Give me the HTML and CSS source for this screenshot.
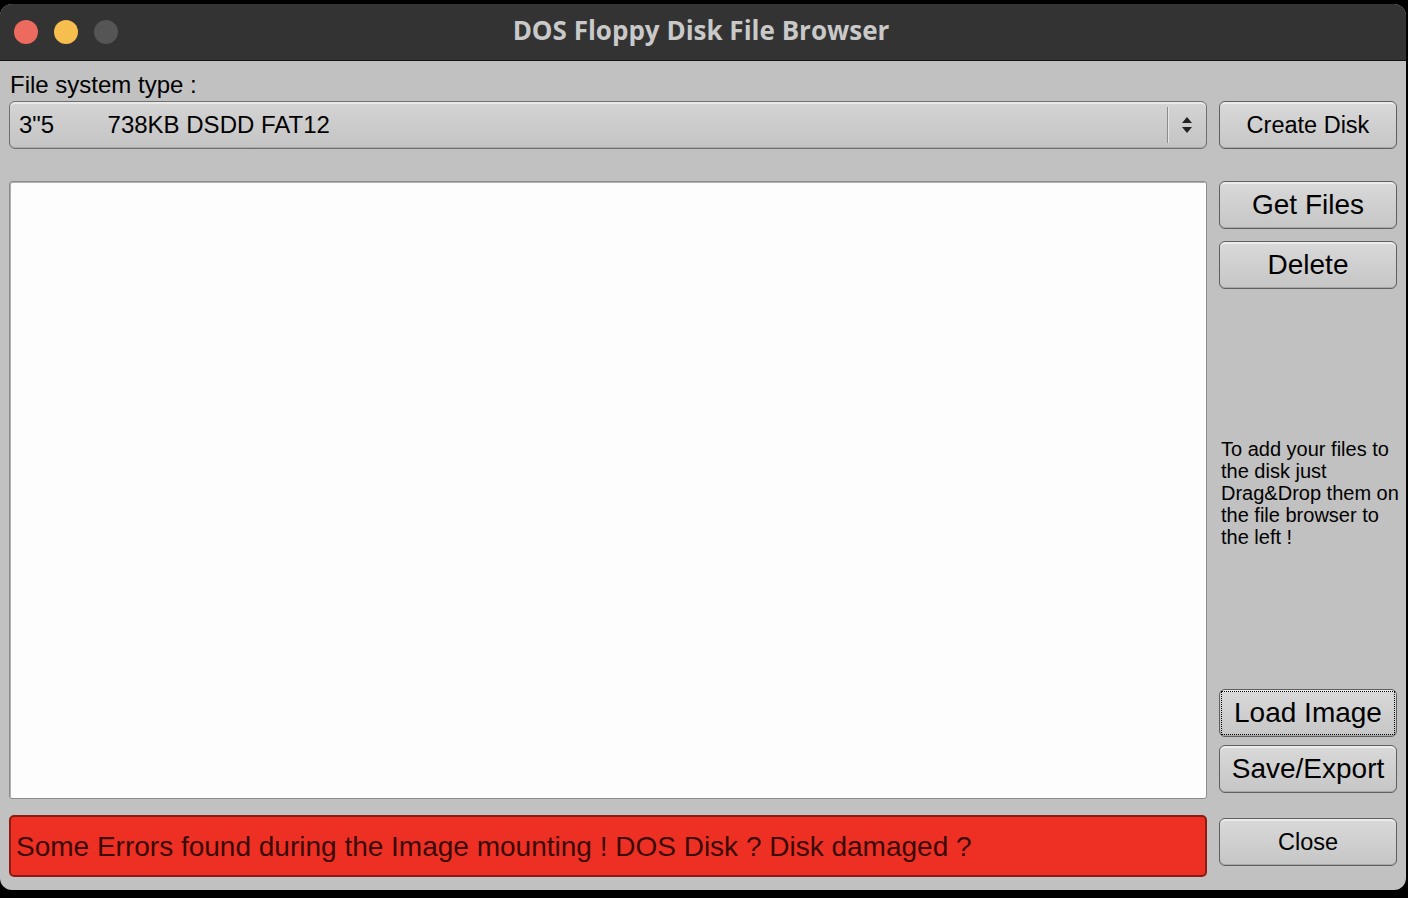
FILE: index.html
```html
<!DOCTYPE html>
<html>
<head>
<meta charset="utf-8">
<link rel="stylesheet" href="styles.css">
</head>
<body>
<div class="window">
  <div class="titlebar">
    <div class="lights">
      <span class="light red"></span>
      <span class="light yellow"></span>
      <span class="light gray"></span>
    </div>
    <div class="title">DOS Floppy Disk File Browser</div>
    <div></div>
  </div>
  <div class="content">
    <div class="label">File system type :</div>
    <div class="row top-row">
      <div class="combo">
        <span class="combo-text">3"5        738KB DSDD FAT12</span>
        <span class="combo-sep"></span>
        <svg class="combo-arrows" width="12" height="22" viewBox="0 0 12 22">
          <path d="M6 3 L11 9 L1 9 Z" fill="#222"/>
          <path d="M6 19 L11 13 L1 13 Z" fill="#222"/>
        </svg>
      </div>
      <button class="btn btn-sm">Create Disk</button>
    </div>
    <div class="row main-row">
      <div class="filelist"></div>
      <div class="side">
        <button class="btn btn-lg">Get Files</button>
        <button class="btn btn-lg">Delete</button>
        <div class="help-wrap">
          <p class="help">To add your files to the disk just Drag&amp;Drop them on the file browser to the left !</p>
        </div>
        <button class="btn btn-lg focused"><span class="focus">Load Image</span></button>
        <button class="btn btn-lg save">Save/Export</button>
      </div>
    </div>
    <div class="row bottom-row">
      <div class="error">Some Errors found during the Image mounting ! DOS Disk ? Disk damaged ?</div>
      <button class="btn btn-sm close">Close</button>
    </div>
  </div>
</div>
</body>
</html>
```

FILE: styles.css
```css
html, body {
  margin: 0;
  padding: 0;
  background: #000;
}
body {
  width: 1408px;
  height: 898px;
  overflow: hidden;
  font-family: "Liberation Sans", Arial, sans-serif;
  color: #000;
}
.window {
  margin-top: 4px;
  width: 1406px;
  height: 886px;
  background: #c1c1c1;
  border-radius: 12px;
  overflow: hidden;
  display: flex;
  flex-direction: column;
}
.titlebar {
  height: 56px;
  flex: none;
  background: #333333;
  border-bottom: 1px solid #141414;
  display: grid;
  grid-template-columns: 1fr auto 1fr;
  align-items: center;
}
.lights {
  display: flex;
  gap: 16px;
  padding-left: 14px;
}
.light {
  width: 24px;
  height: 24px;
  border-radius: 50%;
  display: block;
}
.red { background: #ed6a5f; }
.yellow { background: #f5be4f; }
.gray { background: #555555; }
.title {
  font-family: "Open Sans", "Liberation Sans", sans-serif;
  font-weight: 700;
  font-size: 26px;
  line-height: 30px;
  color: #c9c9c9;
  margin-top: -4px;
  margin-right: 4px;
}
.content {
  flex: 1;
  display: flex;
  flex-direction: column;
  padding: 10px 9px 12px 9px;
}
.label {
  font-size: 24px;
  line-height: 28px;
  padding-left: 1px;
  margin-bottom: 2px;
}
.row {
  display: flex;
  gap: 12px;
}
.combo {
  flex: 1;
  height: 48px;
  box-sizing: border-box;
  border: 1px solid #6f6f6f;
  border-radius: 6px;
  background: linear-gradient(#d4d4d4, #c4c4c4);
  box-shadow: inset 0 2px 0 #e9e9e9, inset 0 -1px 0 #a9a9a9;
  display: flex;
  align-items: center;
  padding-left: 9px;
}
.combo-text {
  flex: 1;
  font-size: 24px;
  white-space: pre;
}
.combo-sep {
  width: 1px;
  height: 36px;
  background: #8a8a8a;
  box-shadow: 1px 0 0 #e6e6e6;
}
.combo-arrows {
  margin: 0 13px 0 13px;
}
.btn {
  width: 178px;
  flex: none;
  height: 48px;
  box-sizing: border-box;
  border: 1px solid #5f5f5f;
  border-radius: 6px;
  background: linear-gradient(#d9d9d9, #c6c6c6);
  box-shadow: inset 0 2px 0 #ececec, inset 0 -1px 0 #a8a8a8;
  font-family: "Liberation Sans", Arial, sans-serif;
  color: #000;
  padding: 0;
  display: flex;
  align-items: center;
  justify-content: center;
}
.btn-sm { font-size: 23.5px; }
.btn-lg { font-size: 28px; }
.main-row {
  margin-top: 32px;
  height: 618px;
}
.filelist {
  flex: 1;
  box-sizing: border-box;
  background: #fdfdfd;
  border: 1px solid #8c8c8c;
  border-radius: 3px;
  box-shadow: inset 1px 1px 0 #b0b0b0;
}
.side {
  width: 178px;
  display: flex;
  flex-direction: column;
  gap: 12px;
  padding-bottom: 6px;
}
.help-wrap {
  flex: 1;
  display: flex;
  align-items: center;
  margin-right: -10px;
  padding-top: 8px;
}
.help {
  margin: 0 0 0 2px;
  font-size: 20px;
  line-height: 22px;
}
.side .save { margin-top: -4px; }
.focus {
  display: flex;
  align-items: center;
  justify-content: center;
  width: 172px;
  height: 42px;
  box-sizing: border-box;
  outline: 1px dotted #000;
}
.bottom-row {
  margin-top: 16px;
  align-items: center;
}
.error {
  flex: 1;
  height: 62px;
  box-sizing: border-box;
  background: #ee3024;
  border: 2px solid #8e1b13;
  border-radius: 5px;
  font-size: 28px;
  color: #3a0b08;
  display: flex;
  align-items: center;
  padding: 2px 0 0 5px;
}
.close {
  margin-top: -8px;
}
```
